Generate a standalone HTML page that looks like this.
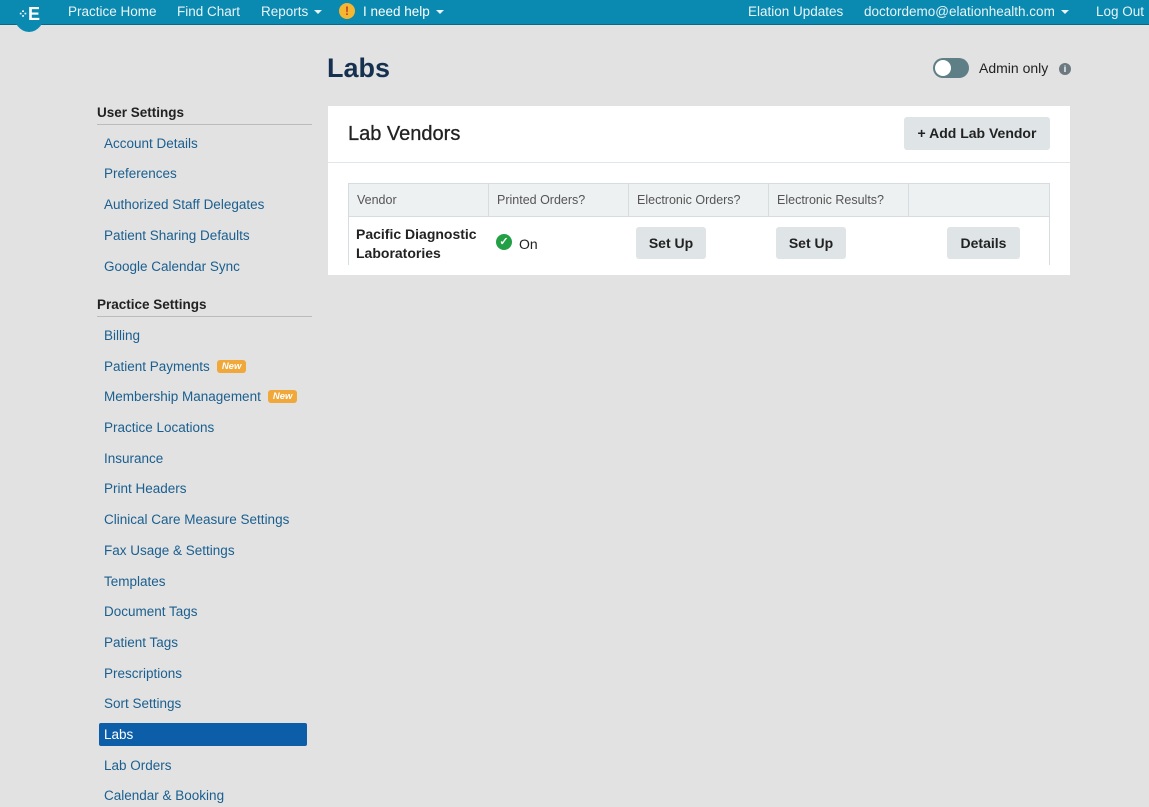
<!DOCTYPE html>
<html><head><meta charset="utf-8"><style>
*{box-sizing:border-box;margin:0;padding:0}
body{width:1149px;height:807px;overflow:hidden;background:#e2e2e2;font-family:"Liberation Sans",sans-serif;position:relative;color:#222}
.nav{position:absolute;left:0;top:0;width:1149px;height:25px;background:#0a89b1;border-bottom:1px solid #07688a;color:#e8f4f8;font-size:13.5px}
.nav span{position:absolute;top:4px;white-space:nowrap}
.logo{position:absolute;left:13px;top:-8px;width:32px;height:40px;border-radius:50%;background:#0a89b1;color:#fff;font-weight:bold;font-size:18px;text-align:center;line-height:44px}
.car{display:inline-block;border-left:4px solid transparent;border-right:4px solid transparent;border-top:4px solid #e8f4f8;vertical-align:middle;margin-left:6px}
h1{position:absolute;left:327px;top:53px;font-size:27px;color:#16314f;font-weight:bold}
.sh{position:absolute;left:97px;width:215px;font-size:13.5px;font-weight:bold;color:#222;border-bottom:1px solid #bbb;padding-bottom:4px}
.it{position:absolute;left:104px;font-size:13.5px;color:#1a5f8f;white-space:nowrap}
.new{display:inline-block;background:#f0a83a;color:#fff;font-style:italic;font-weight:bold;font-size:9.5px;padding:1px 5px;border-radius:3px;margin-left:7px;vertical-align:2px}
.act{position:absolute;left:99px;top:723px;width:208px;height:23px;background:#0d5ea9;border-radius:2px;color:#fff;font-size:13.5px;padding:4px 5px}
.panel{position:absolute;left:328px;top:106px;width:742px;height:169px;background:#fff}
.btn{position:absolute;background:#dfe4e6;border-radius:3px;font-weight:bold;font-size:14px;color:#222;text-align:center}
.th{position:absolute;top:183px;height:34px;background:#eef1f2;border:1px solid #d6dcdf;font-size:12.5px;color:#555;padding:9px 8px}
</style></head><body>
<div class="nav">
<div class="logo"><span style="position:static;font-size:12px;vertical-align:2px">⁘</span>E</div>
<span style="left:68px">Practice Home</span>
<span style="left:177px">Find Chart</span>
<span style="left:261px">Reports<i class="car"></i></span>
<span style="left:339px;top:3px;width:16px;height:16px;border-radius:50%;background:#f5b630;color:#c0392b;font-weight:bold;font-size:12px;text-align:center;line-height:16px">!</span>
<span style="left:363px;color:#fff">I need help<i class="car"></i></span>
<span style="left:748px">Elation Updates</span>
<span style="left:864px">doctordemo@elationhealth.com<i class="car"></i></span>
<span style="left:1096px">Log Out</span>
</div>
<h1>Labs</h1>
<div style="position:absolute;left:933px;top:58px;width:36px;height:20px;border-radius:10px;background:#5f7f86"><div style="position:absolute;left:2px;top:2px;width:16px;height:16px;border-radius:50%;background:#fff"></div></div>
<div style="position:absolute;left:979px;top:60px;font-size:14px;color:#222">Admin only</div>
<div style="position:absolute;left:1059px;top:63px;width:12px;height:12px;border-radius:50%;background:#6b7a80;color:#fff;font-size:9px;font-weight:bold;text-align:center;line-height:12px">i</div>

<div class="sh" style="top:105px">User Settings</div>
<div class="it" style="top:136px">Account Details</div>
<div class="it" style="top:166px">Preferences</div>
<div class="it" style="top:197px">Authorized Staff Delegates</div>
<div class="it" style="top:228px">Patient Sharing Defaults</div>
<div class="it" style="top:259px">Google Calendar Sync</div>
<div class="sh" style="top:297px">Practice Settings</div>
<div class="it" style="top:328px">Billing</div>
<div class="it" style="top:359px">Patient Payments<span class="new">New</span></div>
<div class="it" style="top:389px">Membership Management<span class="new">New</span></div>
<div class="it" style="top:420px">Practice Locations</div>
<div class="it" style="top:451px">Insurance</div>
<div class="it" style="top:481px">Print Headers</div>
<div class="it" style="top:512px">Clinical Care Measure Settings</div>
<div class="it" style="top:543px">Fax Usage &amp; Settings</div>
<div class="it" style="top:574px">Templates</div>
<div class="it" style="top:604px">Document Tags</div>
<div class="it" style="top:635px">Patient Tags</div>
<div class="it" style="top:666px">Prescriptions</div>
<div class="it" style="top:696px">Sort Settings</div>
<div class="act">Labs</div>
<div class="it" style="top:758px">Lab Orders</div>
<div class="it" style="top:788px">Calendar &amp; Booking</div>

<div class="panel"><div style="position:absolute;left:0;top:56px;width:742px;border-top:1px solid #e3e6e8"></div>
<div style="position:absolute;left:20px;top:17px;font-size:20px;color:#222;-webkit-text-stroke:0.3px #222">Lab Vendors</div></div>
<div class="btn" style="left:904px;top:117px;width:146px;height:33px;line-height:33px">+ Add Lab Vendor</div>
<div class="th" style="left:348px;width:141px">Vendor</div>
<div class="th" style="left:488px;width:141px">Printed Orders?</div>
<div class="th" style="left:628px;width:141px">Electronic Orders?</div>
<div class="th" style="left:768px;width:141px">Electronic Results?</div>
<div class="th" style="left:908px;width:142px"></div>
<div style="position:absolute;left:348px;top:217px;width:1px;height:48px;background:#d6dcdf"></div>
<div style="position:absolute;left:1049px;top:217px;width:1px;height:48px;background:#d6dcdf"></div>
<div style="position:absolute;left:356px;top:225px;font-size:14px;font-weight:bold;line-height:19px">Pacific Diagnostic<br>Laboratories</div>
<div style="position:absolute;left:496px;top:234px;width:16px;height:16px;border-radius:50%;background:#23a045;color:#fff;font-size:11px;font-weight:bold;text-align:center;line-height:16px">✓</div>
<div style="position:absolute;left:519px;top:236px;font-size:14px">On</div>
<div class="btn" style="left:636px;top:227px;width:70px;height:32px;line-height:32px">Set Up</div>
<div class="btn" style="left:776px;top:227px;width:70px;height:32px;line-height:32px">Set Up</div>
<div class="btn" style="left:947px;top:227px;width:73px;height:32px;line-height:32px">Details</div>
</body></html>
